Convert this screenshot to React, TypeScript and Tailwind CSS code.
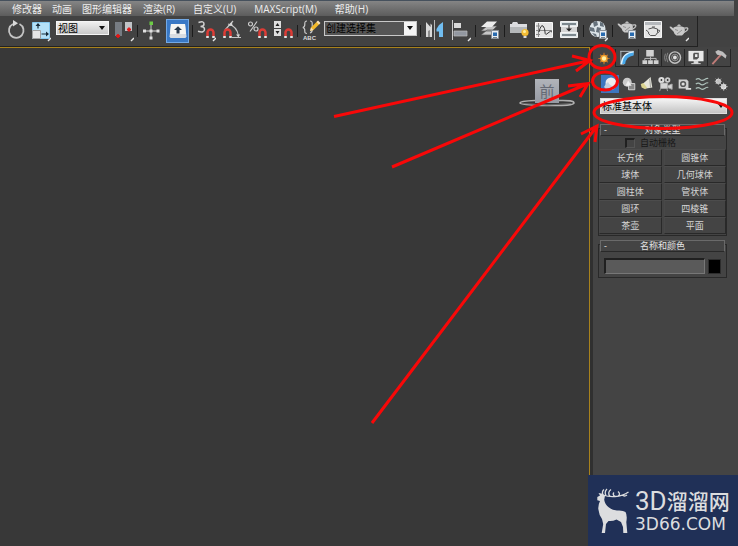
import type { ReactNode } from 'react';

const menus = [
  { label: '修改器', space: 'mr-[10px]' },
  { label: '动画', space: 'mr-[10px]' },
  { label: '图形编辑器', space: 'mr-[11px]' },
  { label: '渲染(R)', space: 'mr-[18px]' },
  { label: '自定义(U)', space: 'mr-[18px]' },
  { label: 'MAXScript(M)', space: 'mr-[18px]' },
  { label: '帮助(H)', space: '' },
];

const primitives = ['长方体', '圆锥体', '球体', '几何球体', '圆柱体', '管状体', '圆环', '四棱锥', '茶壶', '平面'];

const Tool = ({ label, children }: { label: string; children: ReactNode }) => (
  <button aria-label={label} className="w-5 h-6 shrink-0">
    <svg viewBox="0 0 20 24" className="w-5 h-6" fill="none">
      {children}
    </svg>
  </button>
);

const Group = ({ className, children }: { className: string; children: ReactNode }) => (
  <div className={`flex items-center shrink-0 ${className}`}>{children}</div>
);

const Separator = () => <div className="w-px h-3 bg-[#1c1c1c] shrink-0" />;

const Corner = () => <path d="M17 22l3-3" stroke="#e8e8e8" strokeWidth="1.500" />;

const Magnet = () => (
  <>
    <path d="M11.500 17v-3.500a3 3 0 0 1 6 0V17" stroke="#dc3c36" strokeWidth="2.500" />
    <path d="M10.200 18h2.600M16.200 18h2.600" stroke="#e2e2e2" strokeWidth="2" />
  </>
);

const Teapot = () => (
  <>
    <path d="M4.500 9.500Q10 7 15.500 9.500Q17 15 13 17.500H7.500Q5 16 4.500 13.500L1 10l-.5-1.200 1.500-.3 2.500 2z" fill="#c9c9c9" />
    <path d="M8 7.700Q10 5.500 12 7.700z" fill="#e6e6e6" />
    <path d="M15.500 10.200q3.600-1.200 3.300 1-.5 2-3.800 3.300" stroke="#c9c9c9" strokeWidth="1.300" />
    <path d="M6 11.500l3 1M8 16l5-4" stroke="#909090" />
  </>
);

const SmallDialog = () => (
  <>
    <path d="M11.500 11.500h7v8h-7z" fill="#e8edf2" stroke="#8b9299" />
    <path d="M13 13.500h4v3.500h-4z" fill="#286bb0" />
    <path d="M13 18.500h4" stroke="#74808a" />
  </>
);

const Toolbar = () => (
  <div className="flex">
    <div className="flex items-center h-[31px] bg-[#424242] border-r border-b border-[#222] pl-[6px] pr-1">
      <Group className="gap-[5px] pr-[3px]">
        <Tool label="旋转">
          <path d="M7 5A7.300 7.300 0 1 0 13.500 5" stroke="#c4c4c4" strokeWidth="1.800" />
          <path d="M7 1v6.500l5-3.300z" fill="#d8d8d8" />
        </Tool>
        <Tool label="缩放">
          <path d="M1.500 3.500h17v16h-17z" fill="#b5e1f7" stroke="#86c8ed" />
          <path d="M1.500 11.500h8v8h-8z" fill="#e5e5e5" stroke="#a0a0a0" />
          <path d="M7 9.500V5M10.500 15h6" stroke="#172c3a" strokeWidth="1.200" />
          <path d="M4.500 7L7 4l2.500 3zM15 12.500l3 2.500-3 2.500z" fill="#172c3a" />
          <Corner />
        </Tool>
        <div className="relative w-[53px] -mt-[6px]">
          <select aria-label="参考坐标系" className="block appearance-none w-full h-[14px] pl-px text-[10px] leading-[12px] text-black bg-gradient-to-b from-[#efefef] to-[#c9c9c9] border border-[#f5f5f5]">
            <option>视图</option>
          </select>
          <svg viewBox="0 0 6 4" className="absolute right-1 top-[5px] w-[6px] h-1 pointer-events-none">
            <path d="M0 0h6L3 4z" fill="#111" />
          </svg>
        </div>
        <Tool label="使用轴点中心">
          <path d="M1 3h7v14H1z" fill="#777c83" />
          <path d="M11 3h7v9h-7z" fill="#c0c3c7" />
          <path d="M2 17h4M4 15v4M13 10.500h4M15 8.500v4" stroke="#e01818" strokeWidth="1.800" />
          <Corner />
        </Tool>
      </Group>
      <Separator />
      <Group className="gap-[5px] px-[3px]">
        <Tool label="选择并操纵">
          <path d="M10 4v16M3 12h14" stroke="#a9a9a9" strokeWidth="1.300" />
          <path d="M8.500 2.500h3.500v3.500H8.500z" fill="#6ccc44" />
          <path d="M2 10.500h3v3H2zM15.500 10.500h3v3h-3zM8.500 17.500h3v3h-3zM8.500 10.500h3v3h-3z" fill="#e0e0e0" />
        </Tool>
        <button aria-label="键盘快捷键覆盖切换" className="flex items-center justify-center w-[23px] h-6 bg-[#3978c5] border border-[#73a9e5]">
          <svg viewBox="0 0 18 16" className="w-[18px] h-4">
            <path d="M2 1h14l1.500 12.500-1 1.500h-15l-1-1.500z" fill="#d8dce1" />
            <path d="M2 1h14l1 10H1z" fill="#f5f5f3" />
            <path d="M9 3.200L13 7h-2.500v3.500h-3V7H5z" fill="#29394c" />
          </svg>
        </button>
      </Group>
      <Separator />
      <Group className="gap-[6px] px-[3px]">
        <Tool label="捕捉开关">
          <path d="M2.500 3.500q5.500-2 5.500 1.500 0 2.500-3.500 2.500 4 0 4 2.800 0 4-6.500 2" stroke="#d0d0d0" strokeWidth="1.500" />
          <Magnet />
          <Corner />
        </Tool>
        <Tool label="角度捕捉切换">
          <path d="M3 11L11 2M6 5q9 2 10.500 12M10 18.500h9" stroke="#c5c5c5" strokeWidth="1.200" />
          <path d="M6 6.500L10 3l.5 4zM14 15.500h4l-1.500 3z" fill="#d5d5d5" />
          <g transform="translate(-9 0)"><Magnet /></g>
        </Tool>
        <Tool label="百分比捕捉切换">
          <circle cx="2.500" cy="5" r="2" stroke="#ccc" strokeWidth="1.200" />
          <circle cx="8" cy="10" r="2" stroke="#ccc" strokeWidth="1.200" />
          <path d="M9 2.500L2 12.500" stroke="#ccc" strokeWidth="1.200" />
          <Magnet />
        </Tool>
        <Tool label="微调器捕捉切换">
          <path d="M0 2h7v7H0zM0 10h7v7H0z" fill="#dedede" />
          <path d="M1.500 7l2-3 2 3zM1.500 12l2 3 2-3z" fill="#222" />
          <Magnet />
        </Tool>
      </Group>
      <Separator />
      <Group className="gap-[3px] px-[3px]">
        <Tool label="编辑命名选择集">
          <path d="M6 2Q3.500 2 3.800 5q.2 3-2 3.500 2.200.5 2 3.500-.3 2.500 2.200 2.500M9 2q2.500 0 2.200 3v5q.3 3-2.200 4" stroke="#c7c7c7" strokeWidth="1.200" />
          <path d="M9 12l1-3.500L16.500 2l2.500 2.500-6.500 6.500z" fill="#f2b92b" />
          <path d="M9 12l1-3.500 2.500 2.500zM15.500 3l1.500-1.500L19.500 4 18 5.500z" fill="#f4dfbd" />
          <text x="2" y="20.500" fontSize="6" fontWeight="bold" fill="#ddd" fontFamily="Liberation Sans">ABC</text>
        </Tool>
        <div className="relative w-[93px] -mt-[6px]">
          <select aria-label="命名选择集" className="block appearance-none w-full h-[15px] pl-px text-[10px] leading-[13px] text-black bg-[#555] border border-[#c8c8c8]">
            <option>创建选择集</option>
          </select>
          <span className="absolute right-px top-px flex items-center justify-center w-3 h-[13px] bg-[#f5f5f5] pointer-events-none">
            <svg viewBox="0 0 6 4" className="w-[6px] h-1"><path d="M0 0h6L3 4z" fill="#111" /></svg>
          </span>
        </div>
      </Group>
      <Separator />
      <Group className="gap-[7px] pl-[3px] pr-1">
        <Tool label="镜像">
          <path d="M2 3l4.500 5V4.500L8 6v12H5.500v-7L4.500 12v6H2z" fill="#dadada" />
          <path d="M19 3L15 6l-2.500 4v2.500H15V18h4z" fill="#71bdf0" />
          <path d="M10.500 1v20" stroke="#b9b9b9" />
        </Tool>
        <Tool label="对齐">
          <path d="M1.500 1v20" stroke="#ccc" />
          <path d="M3 4h7v5H3z" fill="#d9d9d9" />
          <path d="M3 12h13v5H3z" fill="#9297a0" stroke="#bbb" strokeWidth=".7" />
          <Corner />
        </Tool>
      </Group>
      <Separator />
      <Group className="px-1">
        <Tool label="层管理器">
          <path d="M1 16l6-5h10l-5 5zM1 12l6-5h10l-5 5z" fill="#c6c6c6" stroke="#555" strokeWidth=".7" />
          <path d="M1 8l6-5.500h10L12 8z" fill="#ececec" />
          <SmallDialog />
        </Tool>
      </Group>
      <Separator />
      <Group className="gap-[5px] px-1">
        <Tool label="石墨建模工具">
          <path d="M1 5h2l1-2h4l1 2h9v9H1z" fill="#b5b8ba" />
          <path d="M1 5h2l1-2h4l1 2h9v3H1z" fill="#dcdde0" />
          <circle cx="16" cy="13.500" r="3.600" fill="#f4bd35" />
          <circle cx="15.500" cy="12.500" r="1.500" fill="#fff0a0" />
          <path d="M14.500 17h3v2h-3z" fill="#d9d9d9" />
        </Tool>
        <Tool label="曲线编辑器">
          <path d="M1.500 3.500h17v15h-17z" fill="#e3e3e3" stroke="#f8f8f8" />
          <path d="M2 11.500h16M4.500 4v14M2 7h4M2 15.500h4" stroke="#8a8a8a" />
          <path d="M5 13q2-8 4-6t2 6 3 1 4-1" stroke="#343434" />
        </Tool>
        <Tool label="图解视图">
          <path d="M1.500 2.500h17v5h-17zM1.500 13.500h17v5h-17z" fill="#dfe5e7" stroke="#f2f2f2" />
          <path d="M3 5h14M3 16h14" stroke="#7c878d" strokeWidth="2" />
          <path d="M2 8h16v5H2z" fill="#d5d5d5" />
          <path d="M10 6v4" stroke="#222" />
          <path d="M7 9.500h6l-3 3z" fill="#222" />
        </Tool>
      </Group>
      <Separator />
      <Group className="px-1">
        <Tool label="材质编辑器">
          <circle cx="9.500" cy="10" r="8" fill="#dce4e8" />
          <path d="M5 3l4-1 1 4-4 2zM12 3l3 1 1 4-4-1zM2 8l4 1 1 4-5-1zM9 8l4 1-1 5-4-1zM4 14l4 1 1 3q-3-1-5-4z" fill="#65717b" />
          <SmallDialog />
          <Corner />
        </Tool>
      </Group>
      <Separator />
      <Group className="gap-[6px] px-1">
        <Tool label="渲染设置">
          <g transform="translate(0 -4)"><Teapot /></g>
          <SmallDialog />
        </Tool>
        <Tool label="渲染帧窗口">
          <path d="M1.500 2.500h17v16h-17z" fill="#e5e5e5" stroke="#f5f5f5" />
          <path d="M2 3h16v3H2z" fill="#b5b8bc" />
          <path d="M5.500 10Q10 7.500 14.500 10q1 4-2 6.500h-5Q5 15 5.500 13L3 11M14.500 11q3 0 2 1.500l-2 1.500M9 8h3" stroke="#555" />
        </Tool>
        <Tool label="渲染产品">
          <g transform="translate(0 -1)"><Teapot /></g>
          <Corner />
        </Tool>
      </Group>
    </div>
  </div>
);

const Viewport = () => (
  <main className="flex-1 flex justify-end items-start border-t border-r border-t-[#a8821c] border-r-[#a8821c] bg-[#383838] pt-[31px] pr-[14px]">
    <div className="flex flex-col items-center w-14">
      <button className="w-6 h-6 bg-gradient-to-b from-[#b1b4ba] to-[#969aa3] text-[#656a75] text-[15px] leading-6">前</button>
      <svg viewBox="0 0 56 8" className="w-14 h-2 -mt-1" fill="none">
        <path d="M16 1.500Q1 2 1 4T28 6.500 55 4 40 1.500" stroke="#b0b0b0" strokeWidth="1.600" />
        <path d="M4 4.500Q28 7.500 52 4.500" stroke="#686868" />
      </svg>
    </div>
  </main>
);

const PanelTabs = () => (
  <div className="flex h-[18px]">
    {[
      ['创建', <g key="i"><path d="M11 3v12M5 9h12M7 5l8 8M15 5l-8 8" stroke="#b96f2a" strokeWidth="1.300" /><circle cx="11" cy="9" r="4" fill="#ee9b28" /><circle cx="11" cy="9" r="2.300" fill="#fff1a3" /></g>],
      ['修改', <g key="i"><path d="M4 2.500h14M4.500 2v14M4 16h4M17.500 2v4" stroke="#b5bdc2" /><path d="M5 16Q6 4 18 3v4Q10 8 9 16z" fill="#48a8ea" /><path d="M5 16Q6 4 18 3" stroke="#d9f1ff" strokeWidth="1.500" /></g>],
      ['层次', <g key="i"><path d="M7 1h8v7H7zM3 12h5v4H3zM9 12h5v4H9zM15 12h5v4h-5z" fill="#d1d1d1" /><path d="M11.500 8v4M5.500 12v-2h12v2" stroke="#bbb" /></g>],
      ['运动', <g key="i"><circle cx="13" cy="9" r="6" stroke="#c3c3c3" strokeWidth="1.500" /><circle cx="13" cy="9" r="3.500" stroke="#999" /><circle cx="13" cy="9" r="2" fill="#e1e1e1" /><path d="M5.500 4q-3 5 0 10M3 5q-2 4 0 8" stroke="#888" /></g>],
      ['显示', <g key="i"><path d="M3 2h16v11H3z" fill="#e8e8e8" /><path d="M9 4h5v5l-2 2H8V5z" fill="#555" /><path d="M10 5.500h2.500v3h-2.500z" fill="#eee" /><path d="M9 13h4v2H9zM6 15.500h10" fill="#ddd" stroke="#ddd" /></g>],
      ['实用程序', <g key="i"><path d="M4 16L13 6" stroke="#c07c78" strokeWidth="2" /><path d="M7 3l3-2 5 2 4 4-1 3-4-3-5-1z" fill="#bebebe" /></g>],
    ].map(([label, icon]) => (
      <button key={label as string} aria-label={label as string} className="w-[23px] border-r border-b border-[#252525] first:border-b-0">
        <svg viewBox="0 0 22 18" className="w-[22px] h-[17px]" fill="none">{icon}</svg>
      </button>
    ))}
  </div>
);

const CategoryIcons = () => (
  <div className="grid grid-cols-7 mt-2 mx-2 h-[18px]">
    <button aria-label="几何体" className="flex items-center justify-center bg-[#3d76c0]">
      <svg viewBox="0 0 18 18" className="w-[18px] h-[18px]">
        <circle cx="10" cy="8" r="5.500" fill="#ececec" />
        <path d="M3 12Q4 9 7 7q2 5 8 4-1 4-6 4-4 0-6-3z" fill="#c1cfdf" />
      </svg>
    </button>
    {[
      ['图形', <g key="i"><circle cx="7" cy="7" r="5" fill="#cacaca" /><path d="M8.500 8.500h7v7h-7z" fill="#888" stroke="#ddd" /><path d="M8 5l4 6H5z" fill="#eee" /></g>],
      ['灯光', <g key="i"><path d="M13 1L4 9l4 5 7-1z" fill="#e6e6da" /><path d="M2 9l3-1 4 5-2 2-4-2z" fill="#dbd48f" /><path d="M12 3l1 10" stroke="#999" /></g>],
      ['摄影机', <g key="i"><circle cx="5" cy="4.500" r="3.500" fill="#ddd" /><circle cx="12" cy="4.500" r="3" fill="#ccc" /><path d="M4 8h8v6H4zM12 11l5-2v6l-5-2zM4 14l-1 3M11 14l1 3" fill="#d5d5d5" stroke="#aaa" /><circle cx="5" cy="4.500" r="1" fill="#333" /><circle cx="12" cy="4.500" r="1" fill="#333" /></g>],
      ['辅助对象', <g key="i"><path d="M3 4h9l2 2v8H3z" fill="#d0d0d0" /><circle cx="8" cy="9" r="3.500" fill="#555" /><circle cx="8" cy="9" r="1.800" fill="#ddd" /><path d="M11 14.500h6" stroke="#ddd" strokeWidth="2" /></g>],
      ['空间扭曲', <g key="i"><path d="M2 4q3-2 5 0t5 0 4-1M2 9q3-2 5 0t5 0 4-1M2 14q3-2 5 0t5 0 4-1" stroke="#adc0ba" strokeWidth="1.300" /></g>],
      ['系统', <g key="i"><circle cx="6" cy="6" r="3" fill="#ddd" /><path d="M6 2v8M2 6h8M3 3l6 6M9 3L3 9" stroke="#bbb" /><circle cx="12" cy="12" r="3" fill="#eee" /><path d="M12 7.500v9M7.500 12h9M9 9l6 6M15 9l-6 6" stroke="#ccc" /></g>],
    ].map(([label, icon]) => (
      <button key={label as string} aria-label={label as string} className="flex items-center justify-center">
        <svg viewBox="0 0 18 18" className="w-4 h-4 shrink-0" fill="none">{icon}</svg>
      </button>
    ))}
  </div>
);

const Rollout = ({ title, children }: { title: string; children: ReactNode }) => (
  <section className="relative mx-[5px] pt-[9px]">
    <div className="absolute inset-x-0 top-1 bottom-0 border border-[#292929] pointer-events-none" />
    <h2 className="absolute top-0 inset-x-[2px] h-3 border border-[#6a6a6a] border-b-[#292929] bg-[#444] text-center text-[9px] leading-[10px] text-[#e2e2e2]">
      <span className="absolute left-[3px]">-</span>
      {title}
    </h2>
    {children}
  </section>
);

const CommandPanel = () => (
  <aside className="w-[148px] shrink-0 bg-[#444] border-l-[3px] border-[#303030] pt-[2px]">
    <PanelTabs />
    <CategoryIcons />
    <div className="relative mt-[5px] ml-[7px] mr-[11px]">
      <select aria-label="对象类别" className="block appearance-none w-full h-4 pl-px text-[10px] leading-[14px] text-black bg-gradient-to-b from-[#f4f4f4] to-[#c4c4c4] border border-[#ddd]">
        <option>标准基本体</option>
      </select>
      <svg viewBox="0 0 6 4" className="absolute right-[3px] top-[6px] w-[6px] h-1 pointer-events-none"><path d="M0 0h6L3 4z" fill="#111" /></svg>
    </div>
    <div className="flex flex-col gap-1 mt-[10px] mr-[6px]">
      <Rollout title="对象类型">
        <label className="flex items-center justify-center gap-[5px] h-4 pt-1 pr-6 text-[9px] leading-3 text-[#181818]">
          <input type="checkbox" className="appearance-none w-[10px] h-[10px] border-t-2 border-l-2 border-[#202020] border-b border-r border-b-[#555] border-r-[#555]" />
          自动栅格
        </label>
        <div className="grid grid-cols-2 gap-x-[2px] px-px pb-[2px]">
          {primitives.map((name) => (
            <button key={name} className="h-[17px] px-1 text-[9px] leading-[14px] text-[#d5d5d5] border border-t-[#4c4c4c] border-l-[#484848] border-b-[#292929] border-r-[#292929]">
              {name}
            </button>
          ))}
        </div>
      </Rollout>
      <Rollout title="名称和颜色">
        <div className="flex items-center gap-[3px] px-[6px] pt-[9px] pb-1">
          <input type="text" aria-label="名称" className="min-w-0 flex-1 h-4 bg-[#5a5a5a] border-t-2 border-l-2 border-b border-r border-[#202020] border-b-[#777] border-r-[#777]" />
          <button aria-label="颜色" className="w-[13px] h-[15px] bg-black border border-[#2d2d2d]" />
        </div>
      </Rollout>
    </div>
  </aside>
);

const Annotations = () => (
  <svg viewBox="318 0 420 440" className="absolute top-0 right-0 w-[420px] h-[440px] pointer-events-none" fill="none" stroke="#f80808" strokeWidth="3">
    <path d="M334 116.500L590 60.500M572 56l18 4.500L576 71" />
    <path d="M392 167L587 84M568 86l20-2.500L580 97" />
    <path d="M372 423L597 126M581 134l16-8-2 16" />
    <ellipse cx="602" cy="57" rx="13" ry="11.500" />
    <ellipse cx="605" cy="81" rx="12.500" ry="9" />
    <ellipse cx="663" cy="112.500" rx="69" ry="16" />
  </svg>
);

const SiteLogo = () => (
  <div className="absolute right-0 bottom-0 flex items-center w-[150px] h-[71px] bg-[#203057] text-[#dcdddf] pl-2">
    <svg viewBox="0 0 34 46" className="w-[34px] h-[46px] shrink-0">
      <path d="M1.300 9L4 7.500 2.500 5l4 .8 2.500 2-.8 4Q9 17 13 19.500q3 2.500 8 3 6-.5 8.500 1.500 2 3.500.8 10l1 11h-4l-.3-6-2-5-4.500-2.500q-4 2-8 1.500L10 36l-1 9H5.700l1.500-9L6 31Q3 27 2.300 21 2 17 4 13l-2.700-.8z" fill="#dcdddf" />
      <path d="M7 7Q5.500 3.500 8 1.500M7 7q6 2 12 1.500 8-.5 13.500-4.500M10 7.500Q8 4 11 1M14 8.500q-3-4 1-7M22 8q3-2 0-4.500M26 7q2.500 2 5 0M19 8.500q-3-2-1-4" fill="none" stroke="#dcdddf" strokeWidth="1.300" />
    </svg>
    <div className="flex flex-col pl-[5px] whitespace-nowrap">
      <div className="flex items-center h-[26px]">
        <span className="font-['Roboto'] text-[26px] leading-[26px]">3D</span>
        <span className="text-[21px] leading-[26px] font-medium">溜溜网</span>
      </div>
      <span className="font-['DejaVu_Sans'] text-[17px] leading-[20px]">3D66.COM</span>
    </div>
  </div>
);

const App = () => (
  <div className="relative min-h-screen flex flex-col overflow-hidden bg-[#424242] font-['Open_Sans','Noto_Sans_CJK_SC',sans-serif]">
    <nav className="flex items-center h-4 mr-1 pl-3 border-t border-[#46515d] bg-gradient-to-b from-[#858585] to-[#5c5c5c] text-[10px] leading-[14px] text-[#ededed] whitespace-nowrap">
      {menus.map((menu) => (
        <button key={menu.label} className={menu.space}>{menu.label}</button>
      ))}
    </nav>
    <Toolbar />
    <div className="flex flex-1">
      <Viewport />
      <CommandPanel />
    </div>
    <Annotations />
    <SiteLogo />
  </div>
);

export default App;
